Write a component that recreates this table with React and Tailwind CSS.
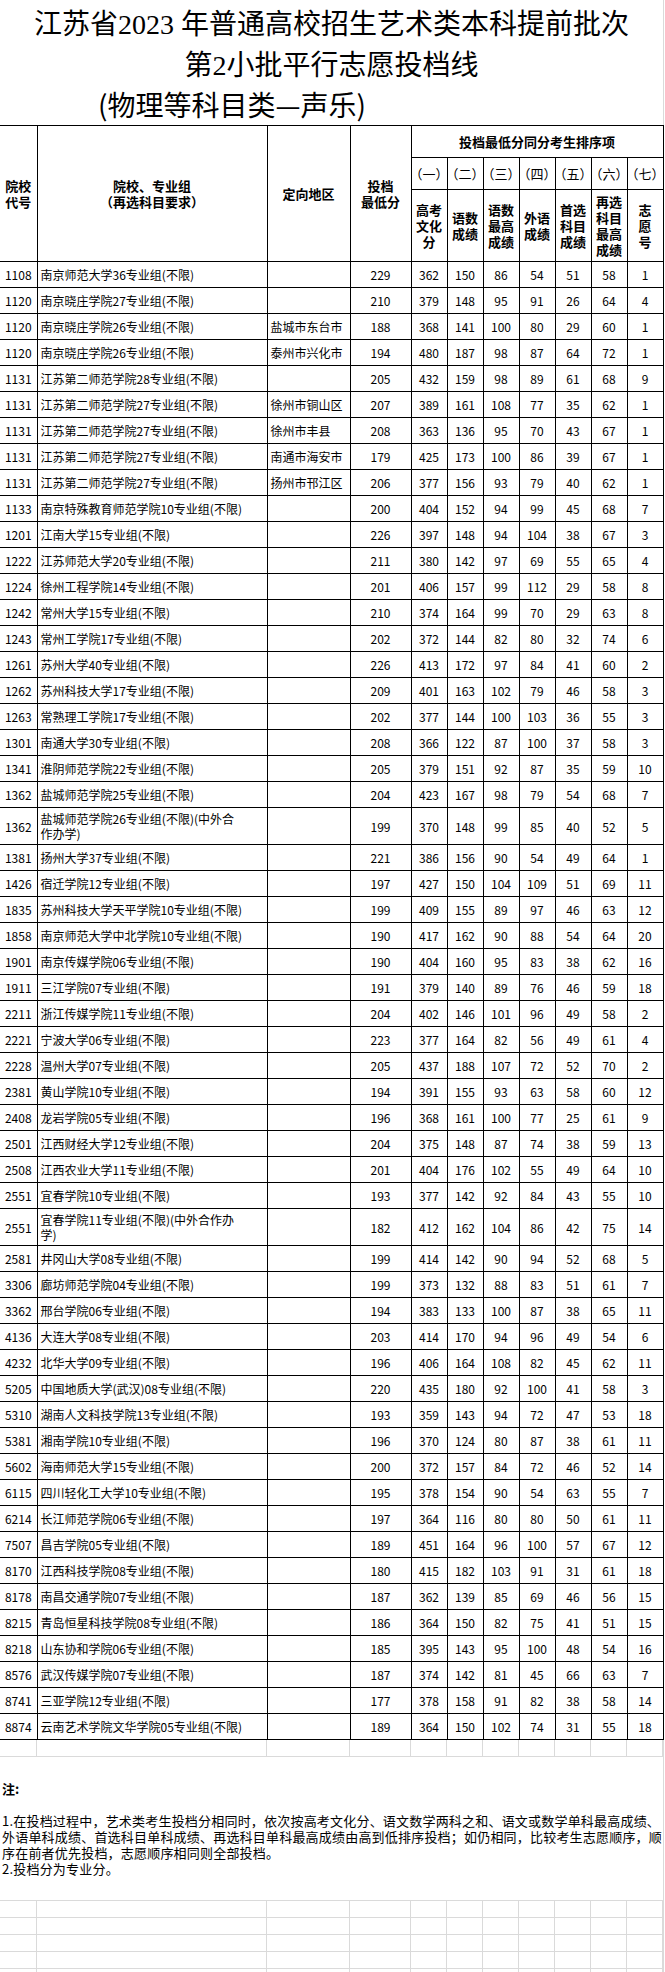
import React from 'react';

const COL_W = ['w-[37px]', 'w-[230px]', 'w-[83px]', 'w-[61px]', 'w-[36px]', 'w-[36px]', 'w-[36px]', 'w-[36px]', 'w-[36px]', 'w-[36px]', 'w-[36px]'];

// code, name, region, min score, then sort items (一)~(七)
const ROWS = [
    ['1108', '南京师范大学36专业组(不限)', '', 229, 362, 150, 86, 54, 51, 58, 1],
    ['1120', '南京晓庄学院27专业组(不限)', '', 210, 379, 148, 95, 91, 26, 64, 4],
    ['1120', '南京晓庄学院26专业组(不限)', '盐城市东台市', 188, 368, 141, 100, 80, 29, 60, 1],
    ['1120', '南京晓庄学院26专业组(不限)', '泰州市兴化市', 194, 480, 187, 98, 87, 64, 72, 1],
    ['1131', '江苏第二师范学院28专业组(不限)', '', 205, 432, 159, 98, 89, 61, 68, 9],
    ['1131', '江苏第二师范学院27专业组(不限)', '徐州市铜山区', 207, 389, 161, 108, 77, 35, 62, 1],
    ['1131', '江苏第二师范学院27专业组(不限)', '徐州市丰县', 208, 363, 136, 95, 70, 43, 67, 1],
    ['1131', '江苏第二师范学院27专业组(不限)', '南通市海安市', 179, 425, 173, 100, 86, 39, 67, 1],
    ['1131', '江苏第二师范学院27专业组(不限)', '扬州市邗江区', 206, 377, 156, 93, 79, 40, 62, 1],
    ['1133', '南京特殊教育师范学院10专业组(不限)', '', 200, 404, 152, 94, 99, 45, 68, 7],
    ['1201', '江南大学15专业组(不限)', '', 226, 397, 148, 94, 104, 38, 67, 3],
    ['1222', '江苏师范大学20专业组(不限)', '', 211, 380, 142, 97, 69, 55, 65, 4],
    ['1224', '徐州工程学院14专业组(不限)', '', 201, 406, 157, 99, 112, 29, 58, 8],
    ['1242', '常州大学15专业组(不限)', '', 210, 374, 164, 99, 70, 29, 63, 8],
    ['1243', '常州工学院17专业组(不限)', '', 202, 372, 144, 82, 80, 32, 74, 6],
    ['1261', '苏州大学40专业组(不限)', '', 226, 413, 172, 97, 84, 41, 60, 2],
    ['1262', '苏州科技大学17专业组(不限)', '', 209, 401, 163, 102, 79, 46, 58, 3],
    ['1263', '常熟理工学院17专业组(不限)', '', 202, 377, 144, 100, 103, 36, 55, 3],
    ['1301', '南通大学30专业组(不限)', '', 208, 366, 122, 87, 100, 37, 58, 3],
    ['1341', '淮阴师范学院22专业组(不限)', '', 205, 379, 151, 92, 87, 35, 59, 10],
    ['1362', '盐城师范学院25专业组(不限)', '', 204, 423, 167, 98, 79, 54, 68, 7],
    ['1362', '盐城师范学院26专业组(不限)(中外合|作办学)', '', 199, 370, 148, 99, 85, 40, 52, 5],
    ['1381', '扬州大学37专业组(不限)', '', 221, 386, 156, 90, 54, 49, 64, 1],
    ['1426', '宿迁学院12专业组(不限)', '', 197, 427, 150, 104, 109, 51, 69, 11],
    ['1835', '苏州科技大学天平学院10专业组(不限)', '', 199, 409, 155, 89, 97, 46, 63, 12],
    ['1858', '南京师范大学中北学院10专业组(不限)', '', 190, 417, 162, 90, 88, 54, 64, 20],
    ['1901', '南京传媒学院06专业组(不限)', '', 190, 404, 160, 95, 83, 38, 62, 16],
    ['1911', '三江学院07专业组(不限)', '', 191, 379, 140, 89, 76, 46, 59, 18],
    ['2211', '浙江传媒学院11专业组(不限)', '', 204, 402, 146, 101, 96, 49, 58, 2],
    ['2221', '宁波大学06专业组(不限)', '', 223, 377, 164, 82, 56, 49, 61, 4],
    ['2228', '温州大学07专业组(不限)', '', 205, 437, 188, 107, 72, 52, 70, 2],
    ['2381', '黄山学院10专业组(不限)', '', 194, 391, 155, 93, 63, 58, 60, 12],
    ['2408', '龙岩学院05专业组(不限)', '', 196, 368, 161, 100, 77, 25, 61, 9],
    ['2501', '江西财经大学12专业组(不限)', '', 204, 375, 148, 87, 74, 38, 59, 13],
    ['2508', '江西农业大学11专业组(不限)', '', 201, 404, 176, 102, 55, 49, 64, 10],
    ['2551', '宜春学院10专业组(不限)', '', 193, 377, 142, 92, 84, 43, 55, 10],
    ['2551', '宜春学院11专业组(不限)(中外合作办|学)', '', 182, 412, 162, 104, 86, 42, 75, 14],
    ['2581', '井冈山大学08专业组(不限)', '', 199, 414, 142, 90, 94, 52, 68, 5],
    ['3306', '廊坊师范学院04专业组(不限)', '', 199, 373, 132, 88, 83, 51, 61, 7],
    ['3362', '邢台学院06专业组(不限)', '', 194, 383, 133, 100, 87, 38, 65, 11],
    ['4136', '大连大学08专业组(不限)', '', 203, 414, 170, 94, 96, 49, 54, 6],
    ['4232', '北华大学09专业组(不限)', '', 196, 406, 164, 108, 82, 45, 62, 11],
    ['5205', '中国地质大学(武汉)08专业组(不限)', '', 220, 435, 180, 92, 100, 41, 58, 3],
    ['5310', '湖南人文科技学院13专业组(不限)', '', 193, 359, 143, 94, 72, 47, 53, 18],
    ['5381', '湘南学院10专业组(不限)', '', 196, 370, 124, 80, 87, 38, 61, 11],
    ['5602', '海南师范大学15专业组(不限)', '', 200, 372, 157, 84, 72, 46, 52, 14],
    ['6115', '四川轻化工大学10专业组(不限)', '', 195, 378, 154, 90, 54, 63, 55, 7],
    ['6214', '长江师范学院06专业组(不限)', '', 197, 364, 116, 80, 80, 50, 61, 11],
    ['7507', '昌吉学院05专业组(不限)', '', 189, 451, 164, 96, 100, 57, 67, 12],
    ['8170', '江西科技学院08专业组(不限)', '', 180, 415, 182, 103, 91, 31, 61, 18],
    ['8178', '南昌交通学院07专业组(不限)', '', 187, 362, 139, 85, 69, 46, 56, 15],
    ['8215', '青岛恒星科技学院08专业组(不限)', '', 186, 364, 150, 82, 75, 41, 51, 15],
    ['8218', '山东协和学院06专业组(不限)', '', 185, 395, 143, 95, 100, 48, 54, 16],
    ['8576', '武汉传媒学院07专业组(不限)', '', 187, 374, 142, 81, 45, 66, 63, 7],
    ['8741', '三亚学院12专业组(不限)', '', 177, 378, 158, 91, 82, 38, 58, 14],
    ['8874', '云南艺术学院文华学院05专业组(不限)', '', 189, 364, 150, 102, 74, 31, 55, 18],
];

const ORDER = ['（一）', '（二）', '（三）', '（四）', '（五）', '（六）', '（七）'];
const LABELS = [
    ['高考', '文化', '分'],
    ['语数', '成绩'],
    ['语数', '最高', '成绩'],
    ['外语', '成绩'],
    ['首选', '科目', '成绩'],
    ['再选', '科目', '最高', '成绩'],
    ['志', '愿', '号'],
];

const th = 'border border-black p-0 text-center align-middle font-bold';
const td = 'border border-black p-0 align-middle';

function Lines({ lines }) {
    return lines.map((l, i) => (
        <React.Fragment key={i}>
            {i > 0 && <br />}
            {l}
        </React.Fragment>
    ));
}

// light spreadsheet gridline row below the table
function GridRow({ h = 'h-[17px]' }) {
    return (
        <div className={`flex ${h} border-b border-[#dadada]`}>
            {COL_W.map((w, i) => (
                <div key={i} className={`${w} shrink-0 border-r border-[#dadada]`} />
            ))}
        </div>
    );
}

export default function App() {
    return (
        <div className="w-[665px] bg-white text-black font-['Noto_Sans_CJK_SC',sans-serif]">
            <div className="w-[664px] border-r border-[#dadada]">
                {/* Title */}
                <div className="h-[125px] pt-[3px] text-[28px] leading-[38px]">
                    <div className="text-center whitespace-nowrap">
                        江苏省<span className="font-['Liberation_Serif',serif]">2023 </span>年普通高校招生艺术类本科提前批次
                    </div>
                    <div className="text-center whitespace-nowrap">
                        第<span className="font-['Liberation_Serif',serif]">2</span>小批平行志愿投档线
                    </div>
                    <div className="pl-[98px] whitespace-nowrap">(物理等科目类—声乐)</div>
                </div>

                {/* Table */}
                <table className="table-fixed border-collapse w-[663px] text-[12px]">
                    <colgroup>
                        {COL_W.map((w, i) => (
                            <col key={i} className={w} />
                        ))}
                    </colgroup>
                    <thead className="text-[13px] leading-4">
                        <tr className="h-[32px]">
                            <th rowSpan={3} className={`${th} border-l-0`}>
                                院校<br />代号
                            </th>
                            <th rowSpan={3} className={th}>
                                院校、专业组<br />（再选科目要求）
                            </th>
                            <th rowSpan={3} className={th}>定向地区</th>
                            <th rowSpan={3} className={th}>
                                投档<br />最低分
                            </th>
                            <th colSpan={7} className={th}>投档最低分同分考生排序项</th>
                        </tr>
                        <tr className="h-[32px]">
                            {ORDER.map((o) => (
                                <th key={o} className={`${th} font-normal whitespace-nowrap [font-feature-settings:'halt']`}>
                                    {o}
                                </th>
                            ))}
                        </tr>
                        <tr className="h-[72px]">
                            {LABELS.map((l, i) => (
                                <th key={i} className={th}>
                                    <Lines lines={l} />
                                </th>
                            ))}
                        </tr>
                    </thead>
                    <tbody className="leading-[15px]">
                        {ROWS.map((r, i) => {
                            const name = r[1].split('|');
                            return (
                                <tr key={i} className={name.length > 1 ? 'h-[37px]' : 'h-[26px]'}>
                                    <td className={`${td} border-l-0 text-center`}>{r[0]}</td>
                                    <td className={`${td} pl-[3px] whitespace-nowrap`}>
                                        <Lines lines={name} />
                                    </td>
                                    <td className={`${td} pl-[3px] whitespace-nowrap`}>{r[2]}</td>
                                    {r.slice(3).map((v, j) => (
                                        <td key={j} className={`${td} text-center`}>
                                            {v}
                                        </td>
                                    ))}
                                </tr>
                            );
                        })}
                    </tbody>
                </table>

                <GridRow />

                {/* Notes */}
                <div className="h-[144px] border-b border-[#dadada] pt-[24px] pl-[2px] text-[13px] leading-4">
                    <div className="font-bold">注:</div>
                    <div className="mt-4 whitespace-nowrap tracking-[0.2px]">
                        1.在投档过程中，艺术类考生投档分相同时，依次按高考文化分、语文数学两科之和、语文或数学单科最高成绩、
                        <br />
                        外语单科成绩、首选科目单科成绩、再选科目单科最高成绩由高到低排序投档；如仍相同，比较考生志愿顺序，顺
                        <br />
                        序在前者优先投档，志愿顺序相同则全部投档。
                        <br />
                        2.投档分为专业分。
                    </div>
                </div>

                <GridRow />
                <GridRow />
                <GridRow />
                <GridRow />
                <GridRow />
            </div>
        </div>
    );
}
